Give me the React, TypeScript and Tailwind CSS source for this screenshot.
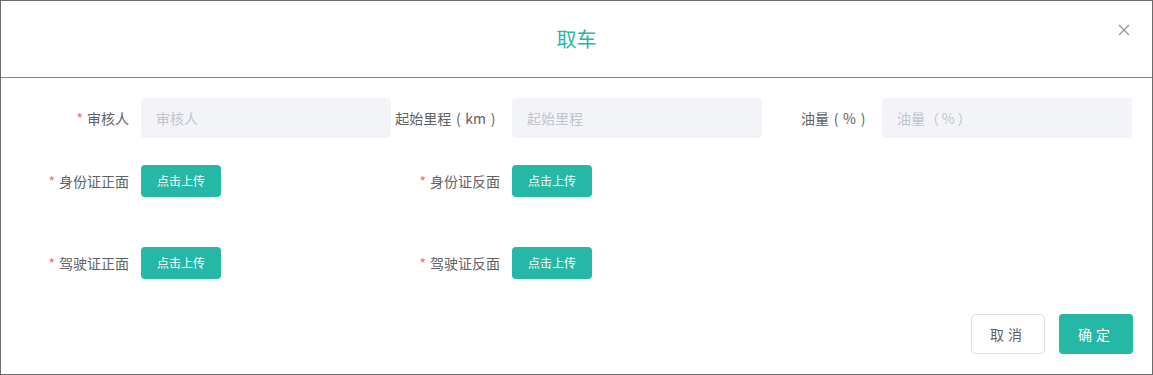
import React from "react";

const font = { fontFamily: '"Noto Sans CJK SC", "Noto Sans", sans-serif' };

function Paren({ children }: { children: string }) {
  return <span className="inline-block w-[14px] text-center">{children}</span>;
}

function Label({ text, required }: { text: React.ReactNode; required?: boolean }) {
  return (
    <label className="flex w-[120px] shrink-0 items-center justify-end whitespace-pre pr-3 text-[14px] text-[#606266]">
      {required && <span className="mr-1 text-[#f56c6c]">*</span>}
      {text}
    </label>
  );
}

function InputItem({
  label,
  placeholder,
  required,
  wide,
}: {
  label: React.ReactNode;
  placeholder: string;
  required?: boolean;
  wide?: boolean;
}) {
  return (
    <div className={wide ? "flex w-[371px] items-center" : "flex w-[370px] items-center"}>
      <Label text={label} required={required} />
      <input
        placeholder={placeholder}
        className="h-10 w-[250px] rounded-[4px] bg-[#f3f4f8] px-[15px] text-[14px] text-[#606266] outline-none placeholder:text-[#c0c4cc]"
      />
    </div>
  );
}

function UploadItem({ label, wide }: { label: string; wide?: boolean }) {
  return (
    <div className={wide ? "flex w-[371px] items-center" : "flex w-[370px] items-center"}>
      <Label text={label} required />
      <button className="h-8 w-20 rounded-[4px] bg-[#26b8a6] text-[12px] text-white">点击上传</button>
    </div>
  );
}

export default function App() {
  return (
    <div style={font} className="h-[375px] w-[1153px] border border-[#6b6b6b] bg-white">
      <div className="relative flex h-[77px] items-center justify-center border-b border-[#45a595]">
        <h2 className="text-[20px] text-[#26b8a6]">取车</h2>
        <button className="absolute right-[22px] top-[23px] h-3 w-3">
          <svg viewBox="0 0 12 12" className="h-3 w-3">
            <path d="M1 1L11 11M11 1L1 11" stroke="#909399" strokeWidth="1.2" />
          </svg>
        </button>
      </div>

      <div className="pl-5 pr-[19px] pt-5">
        <div className="flex">
          <InputItem label="审核人" placeholder="审核人" required wide />
          <InputItem
            label={
              <>
                起始里程<Paren>(</Paren>km<Paren>)</Paren>
              </>
            }
            placeholder="起始里程"
          />
          <InputItem
            label={
              <>
                油量<Paren>(</Paren>%<Paren>)</Paren>
              </>
            }
            placeholder={"油量（\u2009%\u2009）"}
          />
        </div>
        <div className="mt-[27px] flex">
          <UploadItem label="身份证正面" wide />
          <UploadItem label="身份证反面" />
        </div>
        <div className="mt-[50px] flex">
          <UploadItem label="驾驶证正面" wide />
          <UploadItem label="驾驶证反面" />
        </div>
        <div className="mt-[35px] flex justify-end gap-[14px]">
          <button className="h-10 w-[74px] rounded-[4px] border border-[#dcdfe6] bg-white text-[14px] tracking-[4px] text-[#606266]">
            取消
          </button>
          <button className="h-10 w-[74px] rounded-[4px] bg-[#26b8a6] text-[14px] tracking-[4px] text-white">
            确定
          </button>
        </div>
      </div>
    </div>
  );
}
